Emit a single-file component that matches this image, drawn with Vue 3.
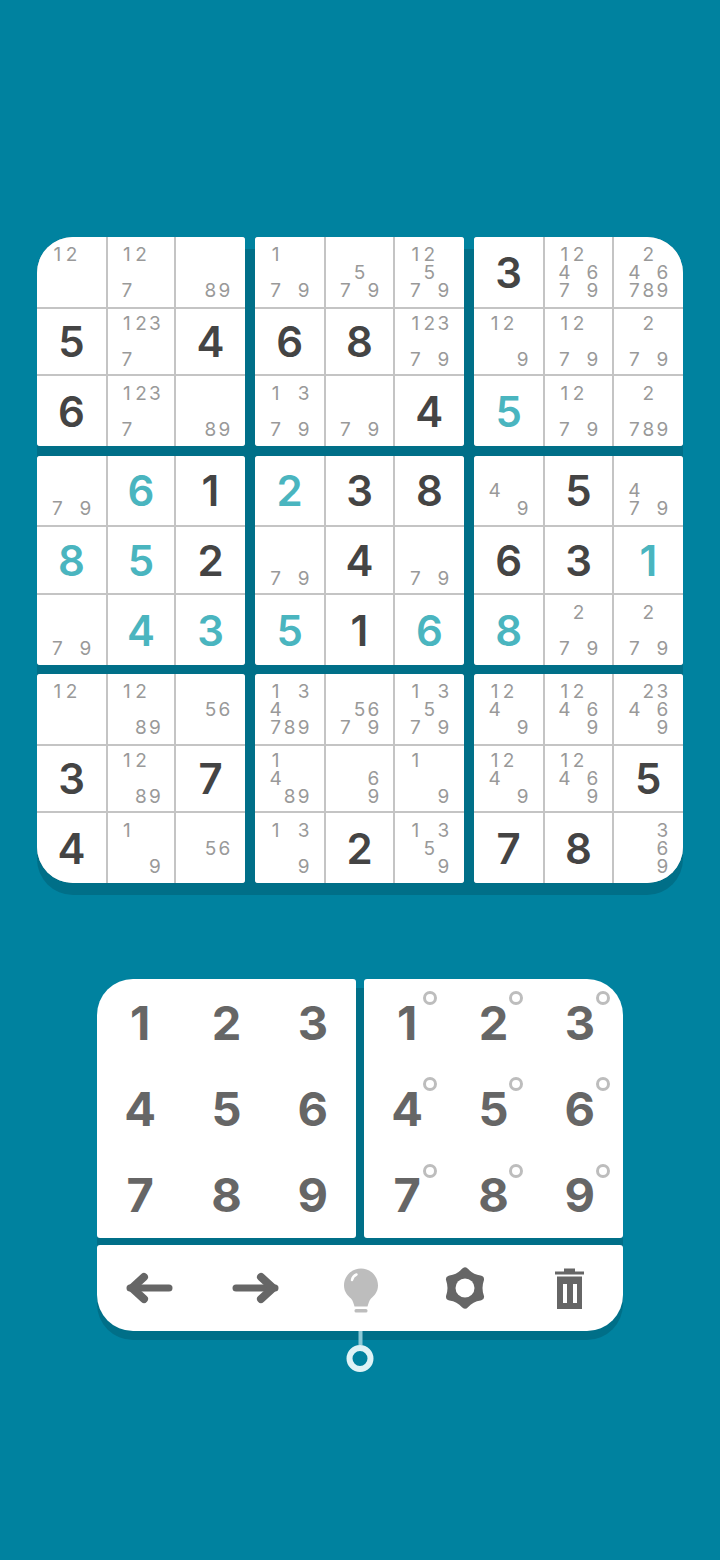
<script setup>
const T = (n) => ({ v: n, t: true })
const V = (n) => ({ v: n })
const N = (s) => ({ n: String(s) })
const rows = [
  [N(12), N(127), N(89), N(179), N(579), N(12579), V(3), N(124679), N(246789)],
  [V(5), N(1237), V(4), V(6), V(8), N(12379), N(129), N(1279), N(279)],
  [V(6), N(1237), N(89), N(1379), N(79), V(4), T(5), N(1279), N(2789)],
  [N(79), T(6), V(1), T(2), V(3), V(8), N(49), V(5), N(479)],
  [T(8), T(5), V(2), N(79), V(4), N(79), V(6), V(3), T(1)],
  [N(79), T(4), T(3), T(5), V(1), T(6), T(8), N(279), N(279)],
  [N(12), N(1289), N(56), N(134789), N(5679), N(13579), N(1249), N(12469), N(23469)],
  [V(3), N(1289), V(7), N(1489), N(69), N(19), N(1249), N(12469), V(5)],
  [V(4), N(19), N(56), N(139), V(2), N(1359), V(7), V(8), N(369)],
]
const blocks = []
for (let br = 0; br < 3; br++) {
  for (let bc = 0; bc < 3; bc++) {
    const cells = []
    for (let r = 0; r < 3; r++) {
      for (let c = 0; c < 3; c++) cells.push(rows[br * 3 + r][bc * 3 + c])
    }
    blocks.push({ id: br * 3 + bc, cells })
  }
}
const digits = [1, 2, 3, 4, 5, 6, 7, 8, 9]
</script>

<template>
  <main class="page">
    <section class="board">
      <div v-for="b in blocks" :key="b.id" :class="['block', 'block-' + b.id]">
        <div v-for="(cell, i) in b.cells" :key="i" class="cell">
          <span v-if="cell.v" :class="['value', { given: cell.t }]">{{ cell.v }}</span>
          <div v-else class="notes">
            <span v-for="d in digits" :key="d" class="note">{{ cell.n.includes(String(d)) ? d : '' }}</span>
          </div>
        </div>
      </div>
    </section>

    <section class="tray">
      <div class="pads">
        <div class="pad pad-left">
          <button v-for="d in digits" :key="d" class="key">{{ d }}</button>
        </div>
        <div class="pad pad-right">
          <button v-for="d in digits" :key="d" class="key">{{ d }}<i class="pencil"></i></button>
        </div>
      </div>
      <div class="tools">
        <button class="tool">
          <svg width="52" height="52" viewBox="0 0 52 52"><path d="M6 26H45" stroke="#666" stroke-width="7" stroke-linecap="round" fill="none"/><path d="M20 15L8 26L20 37" stroke="#666" stroke-width="8" stroke-linecap="round" stroke-linejoin="round" fill="none"/></svg>
        </button>
        <button class="tool">
          <svg width="52" height="52" viewBox="0 0 52 52"><path d="M7 26H46" stroke="#666" stroke-width="7" stroke-linecap="round" fill="none"/><path d="M32 15L44 26L32 37" stroke="#666" stroke-width="8" stroke-linecap="round" stroke-linejoin="round" fill="none"/></svg>
        </button>
        <button class="tool">
          <svg width="52" height="52" viewBox="0 0 52 52"><path d="M27 6.500C36.500 6.500 44 14 44 23.500C44 30 40 34 37 36.500C35 38.500 34.500 41.500 33.500 44.500H20.500C19.500 41.500 19 38.500 17 36.500C14 34 10 30 10 23.500C10 14 17.500 6.500 27 6.500Z" fill="#bdbdbd"/><rect x="20.500" y="47" width="13" height="3.500" rx="1.500" fill="#bdbdbd"/><path d="M18 18C18.500 15.500 20 13.500 22.500 12.500" stroke="#fff" stroke-width="2.500" stroke-linecap="round" fill="none"/></svg>
        </button>
        <button class="tool">
          <svg width="52" height="52" viewBox="0 0 52 52"><path stroke="#666" stroke-width="8" stroke-linejoin="round" fill="#666" d="M26 9.500Q31.900 16.200 41 17.500Q38 26 41 34.500Q31.900 35.800 26 42.500Q20.100 35.800 11 34.500Q14 26 11 17.500Q20.100 16.200 26 9.500Z"/><circle cx="26" cy="26" r="9.500" fill="#fff"/></svg>
        </button>
        <button class="tool">
          <svg width="52" height="52" viewBox="0 0 52 52"><path d="M20 6.500H31V9.500H40V12.500H11V9.500H20Z" fill="#666"/><path fill-rule="evenodd" d="M13 14.500H38V47H13ZM19 22V41H23V22ZM29 22V41H33V22Z" fill="#666"/></svg>
        </button>
      </div>
      <div class="hint"><span class="stem"></span><span class="ring"></span></div>
    </section>
  </main>
</template>

<style>
html, body { margin: 0; background: #00829f; }
</style>

<style scoped>
.page {
  width: 720px;
  height: 1560px;
  box-sizing: border-box;
  padding-top: 237px;
  background: #00829f;
  font-family: Inter, "Liberation Sans", sans-serif;
  overflow: hidden;
}
.board {
  position: relative;
  width: 646px;
  height: 646px;
  margin: 0 auto;
  display: grid;
  grid-template-columns: 208px 209px 209px;
  grid-template-rows: repeat(3, 209px);
  column-gap: 10px;
  row-gap: 9.5px;
}
.board::before {
  content: "";
  position: absolute;
  inset: 12px 0 -12px 0;
  border-radius: 36px;
  background: #006f88;
}
.block {
  position: relative;
  display: grid;
  grid-template-columns: 70fr 67fr 70fr;
  grid-template-rows: 70fr 66fr 70fr;
  gap: 2px;
  background: #c4c4c4;
  border-radius: 3px;
  overflow: hidden;
}
.block-0 { border-top-left-radius: 36px; }
.block-2 { border-top-right-radius: 36px; }
.block-6 { border-bottom-left-radius: 36px; }
.block-8 { border-bottom-right-radius: 36px; }
.cell {
  background: #fff;
  display: flex;
  align-items: center;
  justify-content: center;
  min-width: 0;
  min-height: 0;
  padding-top: 2px;
}
.value {
  font-size: 42px;
  font-weight: 600;
  line-height: 1;
  color: #444;
}
.value.given { color: #4ab5bf; }
.notes {
  display: grid;
  grid-template-columns: repeat(3, 14px);
  grid-template-rows: repeat(3, 18px);
}
.note {
  font-size: 19px;
  line-height: 18px;
  text-align: center;
  color: #999;
}
.tray {
  position: relative;
  width: 526px;
  margin: 96px auto 0;
  display: flex;
  flex-direction: column;
  gap: 7px;
}
.tray::before {
  content: "";
  position: absolute;
  inset: 9px 0 -9px 0;
  border-radius: 36px;
  background: #006f88;
}
.pads {
  position: relative;
  display: flex;
  gap: 8px;
}
.pad {
  flex: 1;
  height: 259px;
  display: grid;
  grid-template-columns: repeat(3, 1fr);
  grid-template-rows: repeat(3, 1fr);
  background: #fff;
  border-radius: 3px;
}
.pad-left { border-top-left-radius: 36px; }
.pad-right { border-top-right-radius: 36px; }
.key {
  position: relative;
  border: 0;
  padding: 0;
  background: none;
  font-family: inherit;
  font-size: 47px;
  font-weight: 700;
  line-height: 1;
  color: #666;
}
.pencil {
  position: absolute;
  left: calc(50% + 16px);
  top: calc(50% - 31px);
  width: 8px;
  height: 8px;
  border: 3px solid #bdbdbd;
  border-radius: 50%;
}
.tools {
  position: relative;
  height: 86px;
  display: grid;
  grid-template-columns: repeat(5, 1fr);
  align-items: center;
  background: #fff;
  border-radius: 3px 3px 36px 36px;
}
.tool {
  display: flex;
  justify-content: center;
  align-items: center;
  padding: 0;
  border: 0;
  background: none;
}
.hint {
  position: absolute;
  left: 50%;
  bottom: -40.5px;
  transform: translateX(-50%);
  display: flex;
  flex-direction: column;
  align-items: center;
}
.stem {
  width: 4px;
  height: 14px;
  background: #8cc9d6;
}
.ring {
  width: 15px;
  height: 15px;
  border: 6px solid #dff3f6;
  border-radius: 50%;
}
</style>
